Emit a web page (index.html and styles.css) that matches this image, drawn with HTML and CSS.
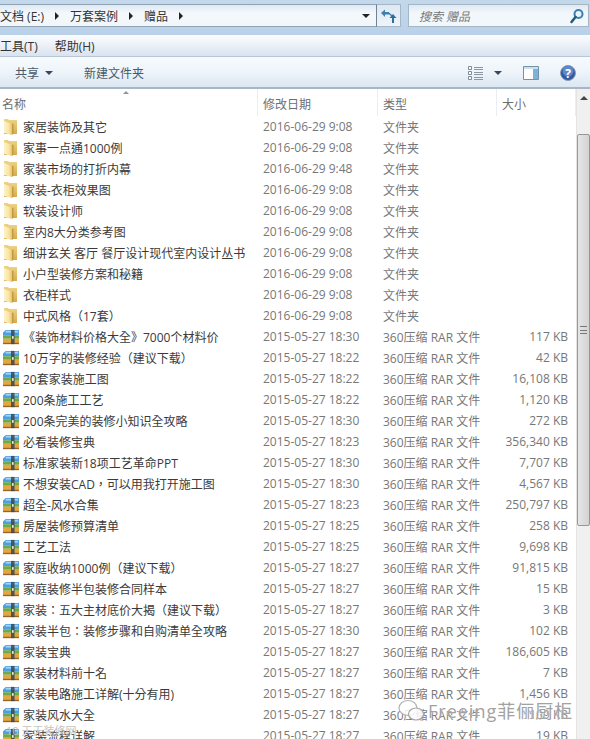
FILE: index.html
```html
<!DOCTYPE html>
<html>
<head>
  <meta charset="utf-8">
  <title>赠品</title>
  <link rel="stylesheet" href="styles.css">
</head>
<body>
  <svg class="defs" width="0" height="0">
    <defs>
      <linearGradient id="fold-back" x1="0" y1="0" x2="0" y2="1">
        <stop offset="0" stop-color="#efd486"/>
        <stop offset="1" stop-color="#d4ac52"/>
      </linearGradient>
      <linearGradient id="fold-front" x1="0" y1="0" x2="1" y2="0">
        <stop offset="0" stop-color="#fdf3c8"/>
        <stop offset="0.6" stop-color="#f9e5a4"/>
        <stop offset="1" stop-color="#e8c468"/>
      </linearGradient>
      <symbol id="folder" viewBox="0 0 16 16">
        <path d="M1 0h4l1 1h8v14H1z" fill="url(#fold-back)"/>
        <path d="M1 2l8 3v11l-8-2z" fill="url(#fold-front)"/>
        <path d="M9 5l1.500-.5v10L9 16z" fill="#c49a3e"/>
      </symbol>
      <symbol id="rar" viewBox="0 0 18 16">
        <path d="M0 3l3-3h15v6H0z" fill="#4f9fe0"/>
        <path d="M3 1h14v2H3z" fill="#a3d4f6"/>
        <path d="M0 6h18v4H0z" fill="#6bab4a"/>
        <path d="M0 10h18v6H0z" fill="#e6a63f"/>
        <path d="M0 14.500h18V16H0z" fill="#96652a"/>
        <path d="M9 0h4v16H9z" fill="#3a4650" opacity="0.85"/>
        <path d="M10 7h2v3h-2z" fill="#efe9cf"/>
      </symbol>
    </defs>
  </svg>

  <div class="addr-bar">
    <div class="addr-box">
      <span class="crumb crumb-first">文档 (E:)</span><i class="sep"></i>
      <span class="crumb">万套案例</span><i class="sep"></i>
      <span class="crumb">赠品</span><i class="sep"></i>
      <i class="drop-arrow"></i>
    </div>
    <div class="refresh">
      <svg width="16" height="16" viewBox="0 0 16 16">
        <path d="M0 5l4-3.500V4h4v2.500H4V9z" fill="#3f7fae"/>
        <path d="M8 5c1 2 2 2.500 3.500 3" fill="none" stroke="#3f7fae" stroke-width="1.500"/>
        <path d="M11 15V10H8.500L12 6l3.500 4H13v5z" fill="#2c6f9e"/>
      </svg>
    </div>
    <div class="search-box">
      <span class="search-hint">搜索 赠品</span>
      <svg width="16" height="16" viewBox="0 0 16 16">
        <circle cx="9.500" cy="6" r="4" fill="#e8f3fa" stroke="#3b80ae" stroke-width="2"/>
        <path d="M6.500 9L2.500 14" stroke="#24587f" stroke-width="2.500" stroke-linecap="round"/>
      </svg>
    </div>
  </div>

  <div class="menu-bar">
    <span class="menu-item">工具(T)</span>
    <span class="menu-item">帮助(H)</span>
  </div>

  <div class="tool-bar">
    <span class="tool-btn">共享<i class="tool-arrow"></i></span>
    <span class="tool-btn">新建文件夹</span>
    <div class="tool-right">
      <svg class="view-icon" width="16" height="14" viewBox="0 0 16 14">
        <path d="M.5.500h3v3h-3zM.5 5.500h3v3h-3zM.5 10.500h3v3h-3z" fill="#fff" stroke="#7d8a99"/>
        <path d="M6 1.500h9M6 3.500h9M6 6.500h9M6 8.500h9M6 11.500h9M6 13.500h9" stroke="#8a96a4"/>
      </svg>
      <i class="tool-arrow view-arrow"></i>
      <svg class="pane-icon" width="16" height="14" viewBox="0 0 16 14">
        <path d="M.5.500h15v13H.5z" fill="#fff" stroke="#6f93ad"/>
        <path d="M10 1h5v12h-5z" fill="#7db4d4"/>
        <path d="M1 1h14v2H1z" fill="#cfe0ec"/>
      </svg>
      <svg class="help-icon" width="16" height="16" viewBox="0 0 16 16">
        <circle cx="8" cy="8" r="7.500" fill="#34589f" stroke="#8c9db5"/>
        <circle cx="8" cy="6" r="5.500" fill="#5f87cc"/>
        <text x="8" y="12.500" class="help-mark">?</text>
      </svg>
    </div>
  </div>

  <div class="main">
    <div class="list">
      <div class="head">
        <span class="head-cell head-name">名称<i class="sort-arrow"></i></span>
        <span class="head-cell">修改日期</span>
        <span class="head-cell">类型</span>
        <span class="head-cell">大小</span>
      </div>

      <div class="row"><span class="name"><svg class="ico"><use href="#folder"/></svg>家居装饰及其它</span><span class="date">2016-06-29 9:08</span><span class="type">文件夹</span></div>
      <div class="row"><span class="name"><svg class="ico"><use href="#folder"/></svg>家事一点通1000例</span><span class="date">2016-06-29 9:08</span><span class="type">文件夹</span></div>
      <div class="row"><span class="name"><svg class="ico"><use href="#folder"/></svg>家装市场的打折内幕</span><span class="date">2016-06-29 9:48</span><span class="type">文件夹</span></div>
      <div class="row"><span class="name"><svg class="ico"><use href="#folder"/></svg>家装-衣柜效果图</span><span class="date">2016-06-29 9:08</span><span class="type">文件夹</span></div>
      <div class="row"><span class="name"><svg class="ico"><use href="#folder"/></svg>软装设计师</span><span class="date">2016-06-29 9:08</span><span class="type">文件夹</span></div>
      <div class="row"><span class="name"><svg class="ico"><use href="#folder"/></svg>室内8大分类参考图</span><span class="date">2016-06-29 9:08</span><span class="type">文件夹</span></div>
      <div class="row"><span class="name"><svg class="ico"><use href="#folder"/></svg>细讲玄关 客厅 餐厅设计现代室内设计丛书</span><span class="date">2016-06-29 9:08</span><span class="type">文件夹</span></div>
      <div class="row"><span class="name"><svg class="ico"><use href="#folder"/></svg>小户型装修方案和秘籍</span><span class="date">2016-06-29 9:08</span><span class="type">文件夹</span></div>
      <div class="row"><span class="name"><svg class="ico"><use href="#folder"/></svg>衣柜样式</span><span class="date">2016-06-29 9:08</span><span class="type">文件夹</span></div>
      <div class="row"><span class="name"><svg class="ico"><use href="#folder"/></svg>中式风格（17套）</span><span class="date">2016-06-29 9:08</span><span class="type">文件夹</span></div>

      <div class="row"><span class="name"><svg class="ico"><use href="#rar"/></svg>《装饰材料价格大全》7000个材料价</span><span class="date">2015-05-27 18:30</span><span class="type">360压缩 RAR 文件</span><span class="size">117 KB</span></div>
      <div class="row"><span class="name"><svg class="ico"><use href="#rar"/></svg>10万字的装修经验（建议下载）</span><span class="date">2015-05-27 18:22</span><span class="type">360压缩 RAR 文件</span><span class="size">42 KB</span></div>
      <div class="row"><span class="name"><svg class="ico"><use href="#rar"/></svg>20套家装施工图</span><span class="date">2015-05-27 18:22</span><span class="type">360压缩 RAR 文件</span><span class="size">16,108 KB</span></div>
      <div class="row"><span class="name"><svg class="ico"><use href="#rar"/></svg>200条施工工艺</span><span class="date">2015-05-27 18:22</span><span class="type">360压缩 RAR 文件</span><span class="size">1,120 KB</span></div>
      <div class="row"><span class="name"><svg class="ico"><use href="#rar"/></svg>200条完美的装修小知识全攻略</span><span class="date">2015-05-27 18:30</span><span class="type">360压缩 RAR 文件</span><span class="size">272 KB</span></div>
      <div class="row"><span class="name"><svg class="ico"><use href="#rar"/></svg>必看装修宝典</span><span class="date">2015-05-27 18:23</span><span class="type">360压缩 RAR 文件</span><span class="size">356,340 KB</span></div>
      <div class="row"><span class="name"><svg class="ico"><use href="#rar"/></svg>标准家装新18项工艺革命PPT</span><span class="date">2015-05-27 18:30</span><span class="type">360压缩 RAR 文件</span><span class="size">7,707 KB</span></div>
      <div class="row"><span class="name"><svg class="ico"><use href="#rar"/></svg>不想安装CAD，可以用我打开施工图</span><span class="date">2015-05-27 18:30</span><span class="type">360压缩 RAR 文件</span><span class="size">4,567 KB</span></div>
      <div class="row"><span class="name"><svg class="ico"><use href="#rar"/></svg>超全-风水合集</span><span class="date">2015-05-27 18:23</span><span class="type">360压缩 RAR 文件</span><span class="size">250,797 KB</span></div>
      <div class="row"><span class="name"><svg class="ico"><use href="#rar"/></svg>房屋装修预算清单</span><span class="date">2015-05-27 18:25</span><span class="type">360压缩 RAR 文件</span><span class="size">258 KB</span></div>
      <div class="row"><span class="name"><svg class="ico"><use href="#rar"/></svg>工艺工法</span><span class="date">2015-05-27 18:25</span><span class="type">360压缩 RAR 文件</span><span class="size">9,698 KB</span></div>
      <div class="row"><span class="name"><svg class="ico"><use href="#rar"/></svg>家庭收纳1000例（建议下载）</span><span class="date">2015-05-27 18:27</span><span class="type">360压缩 RAR 文件</span><span class="size">91,815 KB</span></div>
      <div class="row"><span class="name"><svg class="ico"><use href="#rar"/></svg>家庭装修半包装修合同样本</span><span class="date">2015-05-27 18:27</span><span class="type">360压缩 RAR 文件</span><span class="size">15 KB</span></div>
      <div class="row"><span class="name"><svg class="ico"><use href="#rar"/></svg>家装：五大主材底价大揭（建议下载）</span><span class="date">2015-05-27 18:27</span><span class="type">360压缩 RAR 文件</span><span class="size">3 KB</span></div>
      <div class="row"><span class="name"><svg class="ico"><use href="#rar"/></svg>家装半包：装修步骤和自购清单全攻略</span><span class="date">2015-05-27 18:30</span><span class="type">360压缩 RAR 文件</span><span class="size">102 KB</span></div>
      <div class="row"><span class="name"><svg class="ico"><use href="#rar"/></svg>家装宝典</span><span class="date">2015-05-27 18:27</span><span class="type">360压缩 RAR 文件</span><span class="size">186,605 KB</span></div>
      <div class="row"><span class="name"><svg class="ico"><use href="#rar"/></svg>家装材料前十名</span><span class="date">2015-05-27 18:27</span><span class="type">360压缩 RAR 文件</span><span class="size">7 KB</span></div>
      <div class="row"><span class="name"><svg class="ico"><use href="#rar"/></svg>家装电路施工详解(十分有用)</span><span class="date">2015-05-27 18:27</span><span class="type">360压缩 RAR 文件</span><span class="size">1,456 KB</span></div>
      <div class="row"><span class="name"><svg class="ico"><use href="#rar"/></svg>家装风水大全</span><span class="date">2015-05-27 18:27</span><span class="type">360压缩 RAR 文件</span><span class="size">109 KB</span></div>
      <div class="row"><span class="name"><svg class="ico"><use href="#rar"/></svg>家装流程详解</span><span class="date">2015-05-27 18:27</span><span class="type">360压缩 RAR 文件</span><span class="size">19 KB</span></div>
    </div>

    <div class="scrollbar">
      <i class="scroll-up"></i>
      <div class="thumb"><i class="grip"></i></div>
    </div>
  </div>

  <div class="mark">
    <svg width="28" height="22" viewBox="0 0 28 22">
      <ellipse cx="11" cy="9" rx="9" ry="7.500" fill="#fff" fill-opacity="0.85" stroke="#b5b5b5" stroke-width="1.200"/>
      <ellipse cx="19" cy="15" rx="7.500" ry="6" fill="#fff" fill-opacity="0.85" stroke="#a5a5a5" stroke-width="1.200"/>
    </svg>
    <span>Freeing菲俪厨柜</span>
  </div>
  <span class="mark-left">10 天天装修网</span>
</body>
</html>
```

FILE: styles.css
```css
* {
  box-sizing: border-box;
}
html, body {
  margin: 0;
  height: 739px;
  overflow: hidden;
}
body {
  position: relative;
  font-family: "Open Sans", "Noto Sans CJK SC", sans-serif;
  font-size: 12px;
  color: #444;
  background: #fff;
}
i {
  display: block;
}
.defs {
  position: absolute;
}

/* address bar */
.addr-bar {
  display: flex;
  height: 35px;
  padding-top: 4px;
  background: linear-gradient(#c4d8ec, #b9d1e9);
}
.addr-box {
  display: flex;
  align-items: center;
  width: 377px;
  height: 23px;
  background: linear-gradient(#dfe9f3, #f4f8fb 40%, #f1f6fa);
  border: 1px solid #8fa3b5;
  border-left: 0;
  border-right-color: #6f8396;
  color: #333;
  font-size: 12px;
}
.crumb {
  margin-left: 11px;
  white-space: nowrap;
}
.crumb-first {
  margin-left: 0;
}
.sep {
  width: 0;
  height: 0;
  margin-left: 11px;
  border-left: 4px solid #222;
  border-top: 4px solid transparent;
  border-bottom: 4px solid transparent;
}
.drop-arrow {
  margin-left: auto;
  margin-right: 6px;
  border-top: 4px solid #222;
  border-left: 4px solid transparent;
  border-right: 4px solid transparent;
}
.refresh {
  display: flex;
  align-items: center;
  justify-content: center;
  width: 24px;
  height: 23px;
  background: linear-gradient(#dde8f2, #eef4f9);
  border: 1px solid #a5b6c6;
  border-left: 0;
}
.search-box {
  display: flex;
  align-items: center;
  justify-content: space-between;
  width: 181px;
  height: 23px;
  margin-left: 7px;
  padding: 0 3px 0 10px;
  background: linear-gradient(#dfe9f3, #f2f7fb 40%);
  border: 1px solid #a5b6c6;
}
.search-hint {
  color: #777;
  font-style: italic;
}

/* menu and tools */
.menu-bar {
  display: flex;
  gap: 17px;
  align-items: center;
  height: 22px;
  background: linear-gradient(#fbfcfe, #f2f5fa 30%, #d9e3ef);
  color: #333;
  border-bottom: 1px solid #b8c6d6;
}
.tool-bar {
  display: flex;
  align-items: center;
  height: 32px;
  padding-left: 15px;
  padding-top: 1px;
  background: linear-gradient(#f7fbfe, #eef4fa 50%, #dbe7f2);
  border-bottom: 2px solid #a9b7c5;
  color: #4a5a6a;
}
.tool-btn {
  display: flex;
  align-items: center;
  gap: 6px;
  margin-right: 31px;
}
.tool-arrow {
  border-top: 4px solid #3a4a5e;
  border-left: 4px solid transparent;
  border-right: 4px solid transparent;
}
.tool-right {
  display: flex;
  align-items: center;
  margin-left: auto;
  margin-right: 14px;
}
.view-arrow {
  margin-left: 10px;
}
.pane-icon {
  margin-left: 21px;
}
.help-icon {
  margin-left: 21px;
}
.help-mark {
  fill: #fff;
  font-size: 12px;
  font-weight: bold;
  text-anchor: middle;
}

/* file list */
.main {
  display: flex;
  height: 650px;
}
.list {
  width: 576px;
  overflow: hidden;
}
.head {
  display: grid;
  grid-template-columns: 258px 120px 119px 79px;
  height: 27px;
}
.head-cell {
  display: flex;
  align-items: center;
  padding-left: 5px;
  padding-top: 2px;
  color: #6a6f75;
  border-right: 1px solid #e8eef4;
}
.head-name {
  position: relative;
  padding-left: 2px;
}
.sort-arrow {
  position: absolute;
  left: 123px;
  top: 2px;
  border-bottom: 3px solid #8b97a3;
  border-left: 3px solid transparent;
  border-right: 3px solid transparent;
}
.row {
  display: grid;
  grid-template-columns: 258px 120px 119px 71px;
  align-items: center;
  height: 21px;
  white-space: nowrap;
}
.name {
  display: flex;
  align-items: center;
  gap: 4px;
  padding-left: 3px;
  /* comma, colon and brackets sit centred in the reference */
  font-family: "Open Sans", "Noto Sans CJK TC", sans-serif;
  color: #3a3a3a;
}
.ico {
  flex: none;
  width: 16px;
  height: 16px;
}
.date {
  padding-left: 5px;
  color: #777;
}
.type {
  padding-left: 5px;
  color: #777;
}
.size {
  text-align: right;
  color: #777;
}

/* scrollbar */
.scrollbar {
  position: relative;
  width: 14px;
  background: #f0f0f0;
  border-left: 1px solid #e4e4e4;
}
.scroll-up {
  width: 0;
  margin: 7px auto 0;
  border-bottom: 4px solid #444;
  border-left: 4px solid transparent;
  border-right: 4px solid transparent;
}
.thumb {
  display: flex;
  align-items: center;
  justify-content: center;
  height: 392px;
  margin-top: 34px;
  background: linear-gradient(90deg, #e6e6e6, #d3d3d3);
  border: 1px solid #979797;
  border-radius: 2px;
}
.grip {
  width: 7px;
  height: 8px;
  border-top: 1px solid #777;
  border-bottom: 1px solid #777;
  background: linear-gradient(#777, #777) center / 100% 1px no-repeat;
}

/* watermarks over the list */
.mark {
  position: absolute;
  left: 397px;
  top: 697px;
  display: flex;
  align-items: center;
  gap: 3px;
  color: #a2a2a2;
  font-size: 18px;
  letter-spacing: 1px;
  text-shadow: 0 0 2px #fff;
}
.mark-left {
  position: absolute;
  left: 6px;
  top: 722px;
  color: #c4c4c4;
  font-size: 11px;
}
```
